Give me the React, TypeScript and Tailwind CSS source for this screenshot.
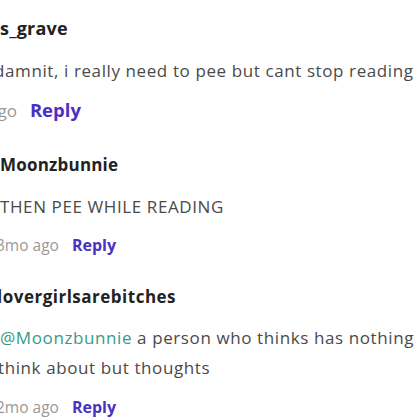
export default function App() {
  return (
    <div className="w-[420px] h-[420px] overflow-hidden bg-white font-['Open_Sans',sans-serif] whitespace-nowrap">
      {/* first comment, rendered a bit larger */}
      <div className="pt-[16px]">
        <div className="text-[18px] leading-[24px] font-bold tracking-[0.2px] text-[#222]">s_grave</div>
        <div className="-ml-[6px] mt-[19px] text-[17px] leading-[24px] tracking-[0.6px] text-[#4a4a4a]">
          damnit, i really need to pee but cant stop reading
        </div>
        <div className="mt-[14px] flex items-baseline">
          <span className="-ml-[12px] text-[17px] leading-[26px] text-[#999]">ago</span>
          <span className="ml-[13px] text-[18.5px] leading-[26px] font-bold text-[#4b30c4]">Reply</span>
        </div>
      </div>

      <div className="pt-[30px]">
        <div className="text-[17px] leading-[22px] font-bold tracking-[0.2px] text-[#222]">Moonzbunnie</div>
        <div className="mt-[20px] text-[17px] leading-[22px] tracking-[0.6px] text-[#4a4a4a]">THEN PEE WHILE READING</div>
        <div className="mt-[16px] flex items-baseline">
          <span className="-ml-[4px] text-[15.5px] leading-[22px] text-[#999]">3mo ago</span>
          <span className="ml-[13px] text-[16px] leading-[22px] font-bold text-[#4b30c4]">Reply</span>
        </div>
      </div>

      <div className="pt-[30px]">
        <div className="-ml-[3px] text-[17px] leading-[22px] font-bold tracking-[0.5px] text-[#222]">lovergirlsarebitches</div>
        <div className="mt-[15px] text-[17px] leading-[30px] tracking-[0.6px] text-[#4a4a4a]">
          <div>
            <span className="text-[#3a9988]">@Moonzbunnie</span> a person who thinks has nothing
          </div>
          <div className="-ml-[2px]">think about but thoughts</div>
        </div>
        <div className="mt-[13px] flex items-baseline">
          <span className="-ml-[4px] text-[15.5px] leading-[22px] text-[#999]">2mo ago</span>
          <span className="ml-[13px] text-[16px] leading-[22px] font-bold text-[#4b30c4]">Reply</span>
        </div>
      </div>
    </div>
  );
}
